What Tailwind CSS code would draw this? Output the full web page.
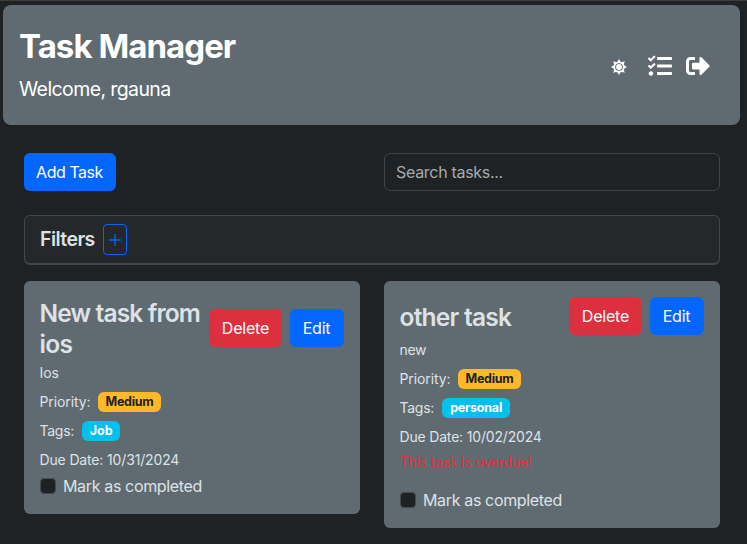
<!DOCTYPE html>
<html lang="en">
<head>
<meta charset="utf-8">
<title>Task Manager</title>
<script src="https://cdn.jsdelivr.net/npm/@tailwindcss/browser@4"></script>
</head>
<body class="h-[544px] overflow-hidden border-t border-[#3a3e3d] bg-[#1e2225] font-[Inter,'Liberation_Sans',sans-serif] text-base text-[#dee2e6]">
<header class="mt-1 mr-[7px] ml-[3px] flex h-[120px] items-center justify-between rounded-lg bg-[#606b71] pr-[30px] pl-4 text-white">
  <div class="-mt-px">
    <h1 class="text-[33px] leading-[41px] font-bold whitespace-nowrap"><span class="tracking-[-0.950px]">Task Manager</span></h1>
    <p class="mt-[7px] text-[19.500px] leading-[30px] whitespace-nowrap"><span class="tracking-[-0.6px]">Welcome, rgauna</span></p>
  </div>
  <nav class="mt-0.5 flex items-center">
    <svg class="mt-0.5 mr-[21px] h-4 w-4" viewBox="0 0 16 16" fill="none" stroke="#fff"><path d="M8 0 9.800 3H6.200zM8 16 9.800 13H6.200zM0 8 3 6.200v3.600zM16 8 13 6.200v3.600zM2.300 2.300l3.400.9-2.500 2.500zM13.700 2.300l-.9 3.400-2.500-2.500zM2.300 13.700l.9-3.400 2.500 2.500zM13.700 13.700l-3.400-.9 2.500-2.500z" fill="#fff" stroke="none"/><circle cx="8" cy="8" r="4.700" stroke-width="1.700"/><circle cx="8" cy="8" r="2.900" fill="#fff" stroke="none"/></svg>
    <svg class="mr-[14px] h-6 w-6" viewBox="0 0 512 512" fill="#fff"><path d="M139.610 35.500a12 12 0 0 0-17 0L58.930 98.810l-22.700-22.120a12 12 0 0 0-17 0L3.530 92.410a12 12 0 0 0 0 17l47.590 47.400a12.780 12.780 0 0 0 17.610 0l15.590-15.620L156.520 69a12.090 12.090 0 0 0 .09-17zm0 159.190a12 12 0 0 0-17 0l-63.680 63.720-22.700-22.100a12 12 0 0 0-17 0L3.530 252a12 12 0 0 0 0 17L51 316.500a12.770 12.770 0 0 0 17.600 0l15.700-15.690 72.200-72.220a12 12 0 0 0 .09-16.900zM64 368c-26.490 0-48.590 21.500-48.590 48S37.530 464 64 464a48 48 0 0 0 0-96zm432 16H208a16 16 0 0 0-16 16v32a16 16 0 0 0 16 16h288a16 16 0 0 0 16-16v-32a16 16 0 0 0-16-16zm0-320H208a16 16 0 0 0-16 16v32a16 16 0 0 0 16 16h288a16 16 0 0 0 16-16V80a16 16 0 0 0-16-16zm0 160H208a16 16 0 0 0-16 16v32a16 16 0 0 0 16 16h288a16 16 0 0 0 16-16v-32a16 16 0 0 0-16-16z"/></svg>
    <svg class="h-6 w-6" viewBox="0 0 512 512" fill="#fff"><path d="M497 273L329 441c-15 15-41 4.500-41-17v-96H152c-13.300 0-24-10.700-24-24v-96c0-13.300 10.700-24 24-24h136V88c0-21.400 25.900-32 41-17l168 168c9.300 9.400 9.300 24.600 0 34zM192 436v-40c0-6.600-5.400-12-12-12H96c-17.700 0-32-14.300-32-32V160c0-17.700 14.300-32 32-32h84c6.600 0 12-5.400 12-12V76c0-6.600-5.400-12-12-12H96c-53 0-96 43-96 96v192c0 53 43 96 96 96h84c6.600 0 12-5.400 12-12z"/></svg>
  </nav>
</header>
<main class="mt-7 mr-[27px] ml-6">
  <div class="grid grid-cols-2 gap-6">
    <div class="flex"><button class="h-[38px] w-[92px] rounded-md bg-[#0366fe] pr-px whitespace-nowrap text-white"><span class="tracking-[-0.450px]">Add Task</span></button></div>
    <div class="flex h-[38px] items-center rounded-md border border-[#3f4449] px-[11px] text-[#a6aaad]"><span class="tracking-[-0.3px]">Search tasks...</span></div>
  </div>
  <section class="mt-6 flex h-[50px] items-center rounded-md border border-b-2 border-[#43474a] bg-[#24282b] pl-[15px]">
    <h5 class="w-[55px] text-[19.500px] font-semibold"><span class="tracking-[-0.550px]">Filters</span></h5>
    <button class="ml-2 flex h-[31px] w-6 items-center justify-center rounded border border-[#0366fe]"><svg class="h-3 w-3" viewBox="0 0 12 12" stroke="#0366fe" stroke-width="1.400"><path d="M6 .3v11.400M.3 6h11.400"/></svg></button>
  </section>
  <div class="mt-4 grid grid-cols-2 items-start gap-6">
    <article class="h-[233px] rounded-md bg-[#606b71] pt-4 pr-4 pl-[15.500px] text-sm">
      <div class="flex items-start justify-between">
        <h4 class="pt-px text-[24.500px] leading-[31px] font-semibold whitespace-nowrap"><span class="tracking-[-0.850px]">New task from</span><br><span class="tracking-[-0.7px]">ios</span></h4>
        <div class="mt-3 flex gap-2 text-base text-white"><button class="h-[38px] w-[73px] rounded-md bg-[#dd303e]"><span class="tracking-[-0.2px]">Delete</span></button><button class="h-[38px] w-[54px] rounded-md bg-[#0366fe] pr-px"><span class="tracking-[-0.2px]">Edit</span></button></div>
      </div>
      <p class="mt-[2px] leading-[21px]"><span class="tracking-[-0.1px]">Ios</span></p>
      <p class="mt-2 flex h-[21px] items-center"><span class="tracking-[-0.1px]">Priority:</span><span class="ml-[7.500px] flex h-5 w-[63px] items-center justify-center rounded-md bg-[#feb828] text-[12.500px] font-bold text-[#1e2225]"><span class="tracking-[-0.3px]">Medium</span></span></p>
      <p class="mt-2 flex h-[21px] items-center"><span class="tracking-[-0.250px]">Tags:</span><span class="ml-2 flex h-5 w-[38px] items-center justify-center rounded-md bg-[#03c0ec] text-[12.500px] font-bold text-white"><span class="tracking-[-0.1px]">Job</span></span></p>
      <p class="mt-2 leading-[21px]"><span class="tracking-[-0.150px]">Due Date: 10/31/2024</span></p>
      <label class="mt-1 flex h-6 items-center text-base"><span class="mr-[7.500px] h-4 w-4 rounded border border-[#43494e] bg-[#1e2225]"></span><span class="tracking-[-0.350px]">Mark as completed</span></label>
    </article>
    <article class="h-[247px] rounded-md bg-[#606b71] pt-4 pr-4 pl-[15.500px] text-sm">
      <div class="flex items-start justify-between">
        <h4 class="mt-[5px] text-[24.500px] leading-[31px] font-semibold whitespace-nowrap"><span class="tracking-[-0.750px]">other task</span></h4>
        <div class="flex gap-2 text-base text-white"><button class="h-[38px] w-[73px] rounded-md bg-[#dd303e]"><span class="tracking-[-0.2px]">Delete</span></button><button class="h-[38px] w-[54px] rounded-md bg-[#0366fe] pr-px"><span class="tracking-[-0.2px]">Edit</span></button></div>
      </div>
      <p class="mt-1 leading-[21px]"><span class="tracking-[-0.3px]">new</span></p>
      <p class="mt-2 flex h-[21px] items-center"><span class="tracking-[-0.1px]">Priority:</span><span class="ml-[7.500px] flex h-5 w-[63px] items-center justify-center rounded-md bg-[#feb828] text-[12.500px] font-bold text-[#1e2225]"><span class="tracking-[-0.3px]">Medium</span></span></p>
      <p class="mt-2 flex h-[21px] items-center"><span class="tracking-[-0.250px]">Tags:</span><span class="ml-2 flex h-5 w-[68px] items-center justify-center rounded-md bg-[#03c0ec] text-[12.500px] font-bold text-white"><span class="tracking-[-0.2px]">personal</span></span></p>
      <p class="mt-2 leading-[21px]"><span class="tracking-[-0.180px]">Due Date: 10/02/2024</span></p>
      <p class="mt-1 leading-[21px] text-[#dd303e]"><span class="tracking-[-0.2px]">This task is overdue!</span></p>
      <label class="mt-4 flex h-6 items-center text-base"><span class="mr-[7.500px] h-4 w-4 rounded border border-[#43494e] bg-[#1e2225]"></span><span class="tracking-[-0.350px]">Mark as completed</span></label>
    </article>
  </div>
</main>
</body>
</html>
